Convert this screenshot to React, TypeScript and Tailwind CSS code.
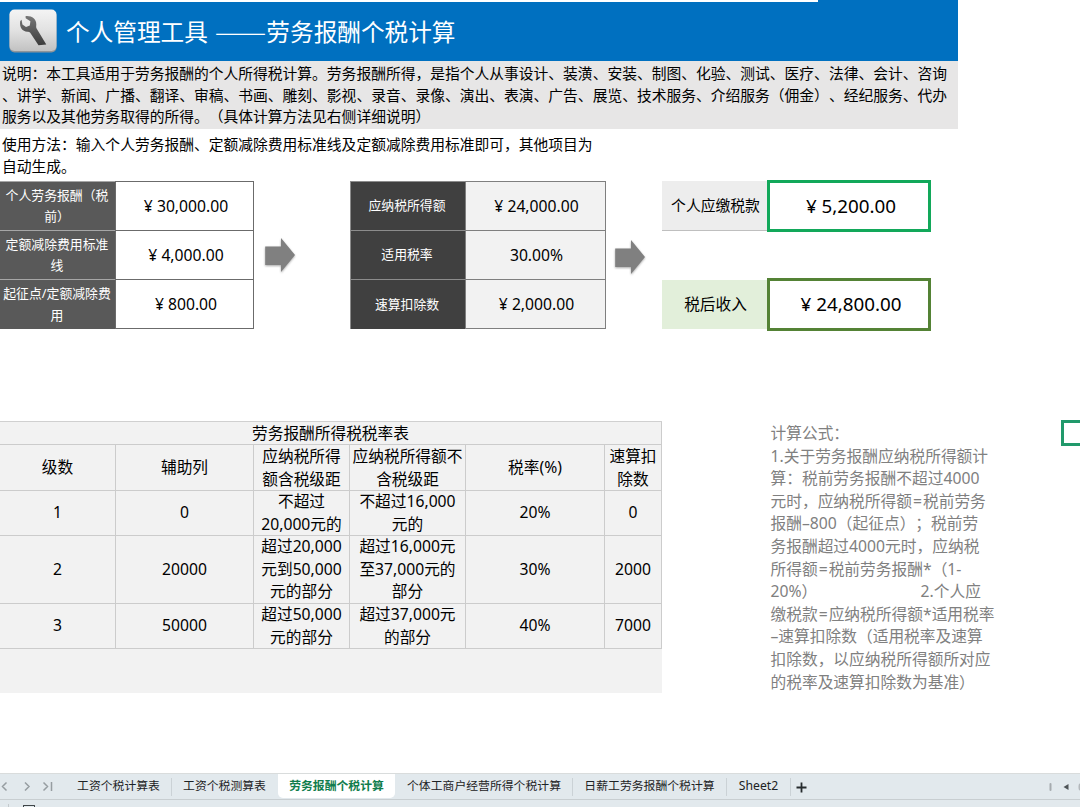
import React from "react";

const FONT =
  "font-['Noto_Sans','Noto_Sans_CJK_SC',sans-serif] [text-spacing-trim:space-all]";

function Lines({ lines, className }: { lines: string[]; className?: string }) {
  return (
    <div className={className}>
      {lines.map((line, i) => (
        <div key={i} className="whitespace-pre">
          {line}
        </div>
      ))}
    </div>
  );
}

function WrenchLogo() {
  return (
    <svg width="48" height="44" viewBox="0 0 48 44" className="shrink-0">
      <defs>
        <linearGradient id="plate" x1="0" y1="0" x2="0" y2="1">
          <stop offset="0" stopColor="#f4f4f4" />
          <stop offset="0.5" stopColor="#e2e2e2" />
          <stop offset="1" stopColor="#c2c2c2" />
        </linearGradient>
        <linearGradient id="tool" x1="0" y1="0" x2="0" y2="1">
          <stop offset="0" stopColor="#777" />
          <stop offset="1" stopColor="#3c3c3c" />
        </linearGradient>
      </defs>
      <rect x="0.5" y="1.5" width="47" height="42" rx="5" fill="#8f9499" />
      <rect x="0.5" y="0.5" width="47" height="41.5" rx="5" fill="url(#plate)" />
      <path
        d="M16.5 7.2 C22.5 6.5 27.5 10 27.3 15.5 C27.2 17.2 27 18.3 27.6 19.4 L37.3 35.5 L29.5 36.2 L21.2 23.7 C20.5 22.8 19.5 22.7 18.3 22.7 C13.5 22.5 10.2 18.5 11.2 12 L12.6 10.8 L13.4 15.6 L17 18 L20.8 16.6 L21.4 12.3 L16.7 9.2 Z"
        fill="url(#tool)"
      />
    </svg>
  );
}

function Arrow() {
  return (
    <svg
      width="36"
      height="42"
      viewBox="0 0 36 42"
      className="drop-shadow-[0_1px_1px_rgba(0,0,0,0.35)]"
    >
      <path d="M1.2 11.5H17V3L31 20L17 37V30H1.2Z" fill="#808080" />
    </svg>
  );
}

const inputs = [
  { label: ["个人劳务报酬（税", "前）"], value: "¥ 30,000.00" },
  { label: ["定额减除费用标准", "线"], value: "¥ 4,000.00" },
  { label: ["起征点/定额减除费", "用"], value: "¥ 800.00" },
];

const middle = [
  { label: "应纳税所得额", value: "¥ 24,000.00" },
  { label: "适用税率", value: "30.00%" },
  { label: "速算扣除数", value: "¥ 2,000.00" },
];

const rateRows: { height: string; cells: string[][] }[] = [
  {
    height: "h-[45px]",
    cells: [
      ["级数"],
      ["辅助列"],
      ["应纳税所得", "额含税级距"],
      ["应纳税所得额不", "含税级距"],
      ["税率(%)"],
      ["速算扣", "除数"],
    ],
  },
  {
    height: "h-[45px]",
    cells: [["1"], ["0"], ["不超过", "20,000元的"], ["不超过16,000", "元的"], ["20%"], ["0"]],
  },
  {
    height: "h-[68px]",
    cells: [
      ["2"],
      ["20000"],
      ["超过20,000", "元到50,000", "元的部分"],
      ["超过16,000元", "至37,000元的", "部分"],
      ["30%"],
      ["2000"],
    ],
  },
  {
    height: "h-[46px]",
    cells: [
      ["3"],
      ["50000"],
      ["超过50,000", "元的部分"],
      ["超过37,000元", "的部分"],
      ["40%"],
      ["7000"],
    ],
  },
];

const formula = [
  "计算公式：",
  "1.关于劳务报酬应纳税所得额计",
  "算：税前劳务报酬不超过4000",
  "元时，应纳税所得额=税前劳务",
  "报酬–800（起征点）；税前劳",
  "务报酬超过4000元时，应纳税",
  "所得额=税前劳务报酬*（1-",
];

const formulaEnd = [
  "缴税款=应纳税所得额*适用税率",
  "–速算扣除数（适用税率及速算",
  "扣除数，以应纳税所得额所对应",
  "的税率及速算扣除数为基准）",
];

function FormulaLines({ lines }: { lines: string[] }) {
  return (
    <div>
      {lines.map((line, i) => (
        <div key={i} className="whitespace-pre">
          {line.split("=").map((part, j) => (
            <React.Fragment key={j}>
              {j > 0 && <span className="px-[1px]">=</span>}
              {part}
            </React.Fragment>
          ))}
        </div>
      ))}
    </div>
  );
}

function Header() {
  return (
    <header className="w-[958px]">
      <div className="h-0.5 w-[958px] bg-[#0070c0]">
        <div className="h-full w-[818px] bg-white" />
      </div>
      <div className="flex h-[59px] items-center gap-[9px] bg-[#0070c0] pb-[1px] pl-[9px] text-white">
        <WrenchLogo />
        <h1 className="whitespace-pre text-[23.65px] leading-[32px]">
          个人管理工具
          <span className="ml-[7px] align-[-2px] font-['Noto_Sans_CJK_SC',sans-serif] text-[31px] font-light leading-none">
            ——
          </span>
          劳务报酬个税计算
        </h1>
      </div>
      <Lines
        className="h-[68px] bg-[#e7e6e6] pl-0.5 pt-0.5 text-[14.78px] leading-[21.7px]"
        lines={[
          "说明：本工具适用于劳务报酬的个人所得税计算。劳务报酬所得，是指个人从事设计、装潢、安装、制图、化验、测试、医疗、法律、会计、咨询",
          "、讲学、新闻、广播、翻译、审稿、书画、雕刻、影视、录音、录像、演出、表演、广告、展览、技术服务、介绍服务（佣金）、经纪服务、代办",
          "服务以及其他劳务取得的所得。（具体计算方法见右侧详细说明）",
        ]}
      />
      <Lines
        className="h-[51px] pl-0.5 pt-[4px] text-[14.78px] leading-[22px]"
        lines={[
          "使用方法：输入个人劳务报酬、定额减除费用标准线及定额减除费用标准即可，其他项目为",
          "自动生成。",
        ]}
      />
    </header>
  );
}

function Calculator() {
  return (
    <section className="flex h-[152px] text-[15.7px]">
      <div className="mt-[1px] h-[149px] w-[254px]">
        {inputs.map((row, i) => (
          <div key={i} className={i === 2 ? "flex h-[50px]" : "flex h-[49px]"}>
            <div className="flex w-[115px] items-center justify-center border-t border-[#a6a6a6] bg-[#595959] pr-px text-center text-[12.85px] leading-[21.5px] text-white">
              <Lines lines={row.label} />
            </div>
            <div
              className={
                "flex w-[139px] items-center justify-center border-l border-r border-t border-[#6b6b6b] pl-[3px] pt-px " +
                (i === 2 ? "border-b" : "")
              }
            >
              {row.value}
            </div>
          </div>
        ))}
      </div>
      <div className="w-[96px] pl-[10px] pt-[55px]">
        <Arrow />
      </div>
      <div className="mt-[1px] w-[256px]">
        {middle.map((row, i) => (
          <div key={i} className={i === 2 ? "flex h-[50px]" : "flex h-[49px]"}>
            <div className="flex w-[115px] items-center justify-center border-l border-t border-[#8c8c8c] bg-[#404040] pr-[2px] text-[12.85px] text-white">
              {row.label}
            </div>
            <div
              className={
                "flex w-[141px] items-center justify-center border-l border-r border-t border-[#7f7f7f] bg-[#f2f2f2] pl-[2px] pt-px " +
                (i === 2 ? "border-b" : "")
              }
            >
              {row.value}
            </div>
          </div>
        ))}
      </div>
      <div className="w-[56px] pl-[8px] pt-[57px]">
        <Arrow />
      </div>
      <div className="flex w-[270px] flex-col gap-[46px]">
        <div className="flex h-[52px]">
          <div className="my-[1px] flex w-[105px] items-center justify-center border-b border-[#bfbfbf] bg-[#ededed] pl-0.5 text-[14.8px]">
            个人应缴税款
          </div>
          <div className="flex w-[164px] items-center justify-center border-[3px] border-[#12a85a] pl-1 text-[18.8px]">
            ¥ 5,200.00
          </div>
        </div>
        <div className="flex h-[53px]">
          <div className="mb-[2px] mt-[2px] flex w-[105px] items-center justify-center bg-[#e2efda] pl-0.5">
            税后收入
          </div>
          <div className="flex w-[164px] items-center justify-center border-[3px] border-[#548235] pl-1 text-[18.8px]">
            ¥ 24,800.00
          </div>
        </div>
      </div>
    </section>
  );
}

function RateTable() {
  return (
    <section className="mt-px h-[272px] w-[662px] shrink-0 border-t border-[#d0d0d0] bg-[#f2f2f2] text-[15.7px] leading-[22.6px]">
      <div className="flex h-[23px] items-center justify-center border-b border-r border-[#cccccc]">
        劳务报酬所得税税率表
      </div>
      {rateRows.map((row, r) => (
        <div
          key={r}
          className={
            "grid grid-cols-[116px_138px_96px_116px_139px_57px] text-center " + row.height
          }
        >
          {row.cells.map((cell, c) => (
            <div
              key={c}
              className="flex items-center justify-center border-b border-r border-[#cccccc]"
            >
              <Lines lines={cell} className="-mx-1" />
            </div>
          ))}
        </div>
      ))}
    </section>
  );
}

function Formula() {
  return (
    <section className="w-[399px] shrink-0 pl-[108.5px] pt-[2px] text-[15.73px] leading-[22.6px] text-[#808080]">
      <FormulaLines lines={formula} />
      <div className="flex whitespace-pre">
        <span className="w-[150px]">20%）</span>
        <span>2.个人应</span>
      </div>
      <FormulaLines lines={formulaEnd} />
    </section>
  );
}

function Divider() {
  return <span className="h-[18px] w-px bg-[#cbd2d6]" />;
}

function SheetBar() {
  return (
    <footer className="h-[34px] overflow-hidden border-t border-[#d9dcdc] bg-[#e2e9ed]">
      <div className="flex h-[26px] border-b border-[#c8ced1] text-[11.85px] text-[#1c2224]">
        <svg width="66" height="25" viewBox="0 0 66 25" fill="none" stroke="#969da1" strokeWidth="1.5">
          <path d="M6.5 8.5L2.5 12.5L6.5 16.5M25 8.5L29 12.5L25 16.5M43.5 8.5L47.5 12.5L43.5 16.5M51.5 8V17" />
        </svg>
        <div className="flex w-[105px] items-center justify-center pb-px">工资个税计算表</div>
        <div className="flex items-center">
          <Divider />
        </div>
        <div className="flex w-[106px] items-center justify-center pb-px pr-px">工资个税测算表</div>
        <div className="-mt-px flex h-[25px] w-[117px] items-center justify-center rounded-b-[5px] bg-white font-bold text-[#107c4c]">
          劳务报酬个税计算
        </div>
        <div className="flex w-[177px] items-center justify-center pb-px pl-px">
          个体工商户经营所得个税计算
        </div>
        <div className="flex items-center">
          <Divider />
        </div>
        <div className="flex w-[153px] items-center justify-center pb-px">日薪工劳务报酬个税计算</div>
        <div className="flex items-center">
          <Divider />
        </div>
        <div className="flex w-[63px] items-center justify-center text-[12.2px]">Sheet2</div>
        <div className="flex items-center">
          <Divider />
        </div>
        <svg width="22" height="25" viewBox="0 0 22 25" stroke="#262c2e" strokeWidth="1.8">
          <path d="M5.5 13.5H15.5M10.5 8.5V18.5" />
        </svg>
        <svg width="36" height="25" viewBox="0 0 36 25" className="ml-auto">
          <rect x="5.5" y="9" width="2" height="8" rx="1" fill="#a6abaf" />
          <path d="M24.5 10V16L19.5 13Z" fill="#4e5457" />
          <rect x="34.5" y="9" width="6" height="8" rx="3" fill="#b3b8bc" />
        </svg>
      </div>
      <div className="flex h-[7px] items-end">
        <span className="ml-[8px] h-[3px] w-px bg-[#c4cacd]" />
        <span className="ml-[14px] h-[2px] w-[12px] rounded-t-[1px] border-x border-t border-[#3f4548]" />
      </div>
    </footer>
  );
}

export default function App() {
  return (
    <main
      className={
        "flex h-[807px] w-[1080px] flex-col overflow-hidden bg-white text-black " + FONT
      }
    >
      <Header />
      <Calculator />
      <div className="mt-[88px] flex flex-1 items-start overflow-hidden">
        <RateTable />
        <Formula />
        <div className="h-[26px] w-[40px] shrink-0 border-[3px] border-[#21996b]" />
      </div>
      <SheetBar />
    </main>
  );
}
